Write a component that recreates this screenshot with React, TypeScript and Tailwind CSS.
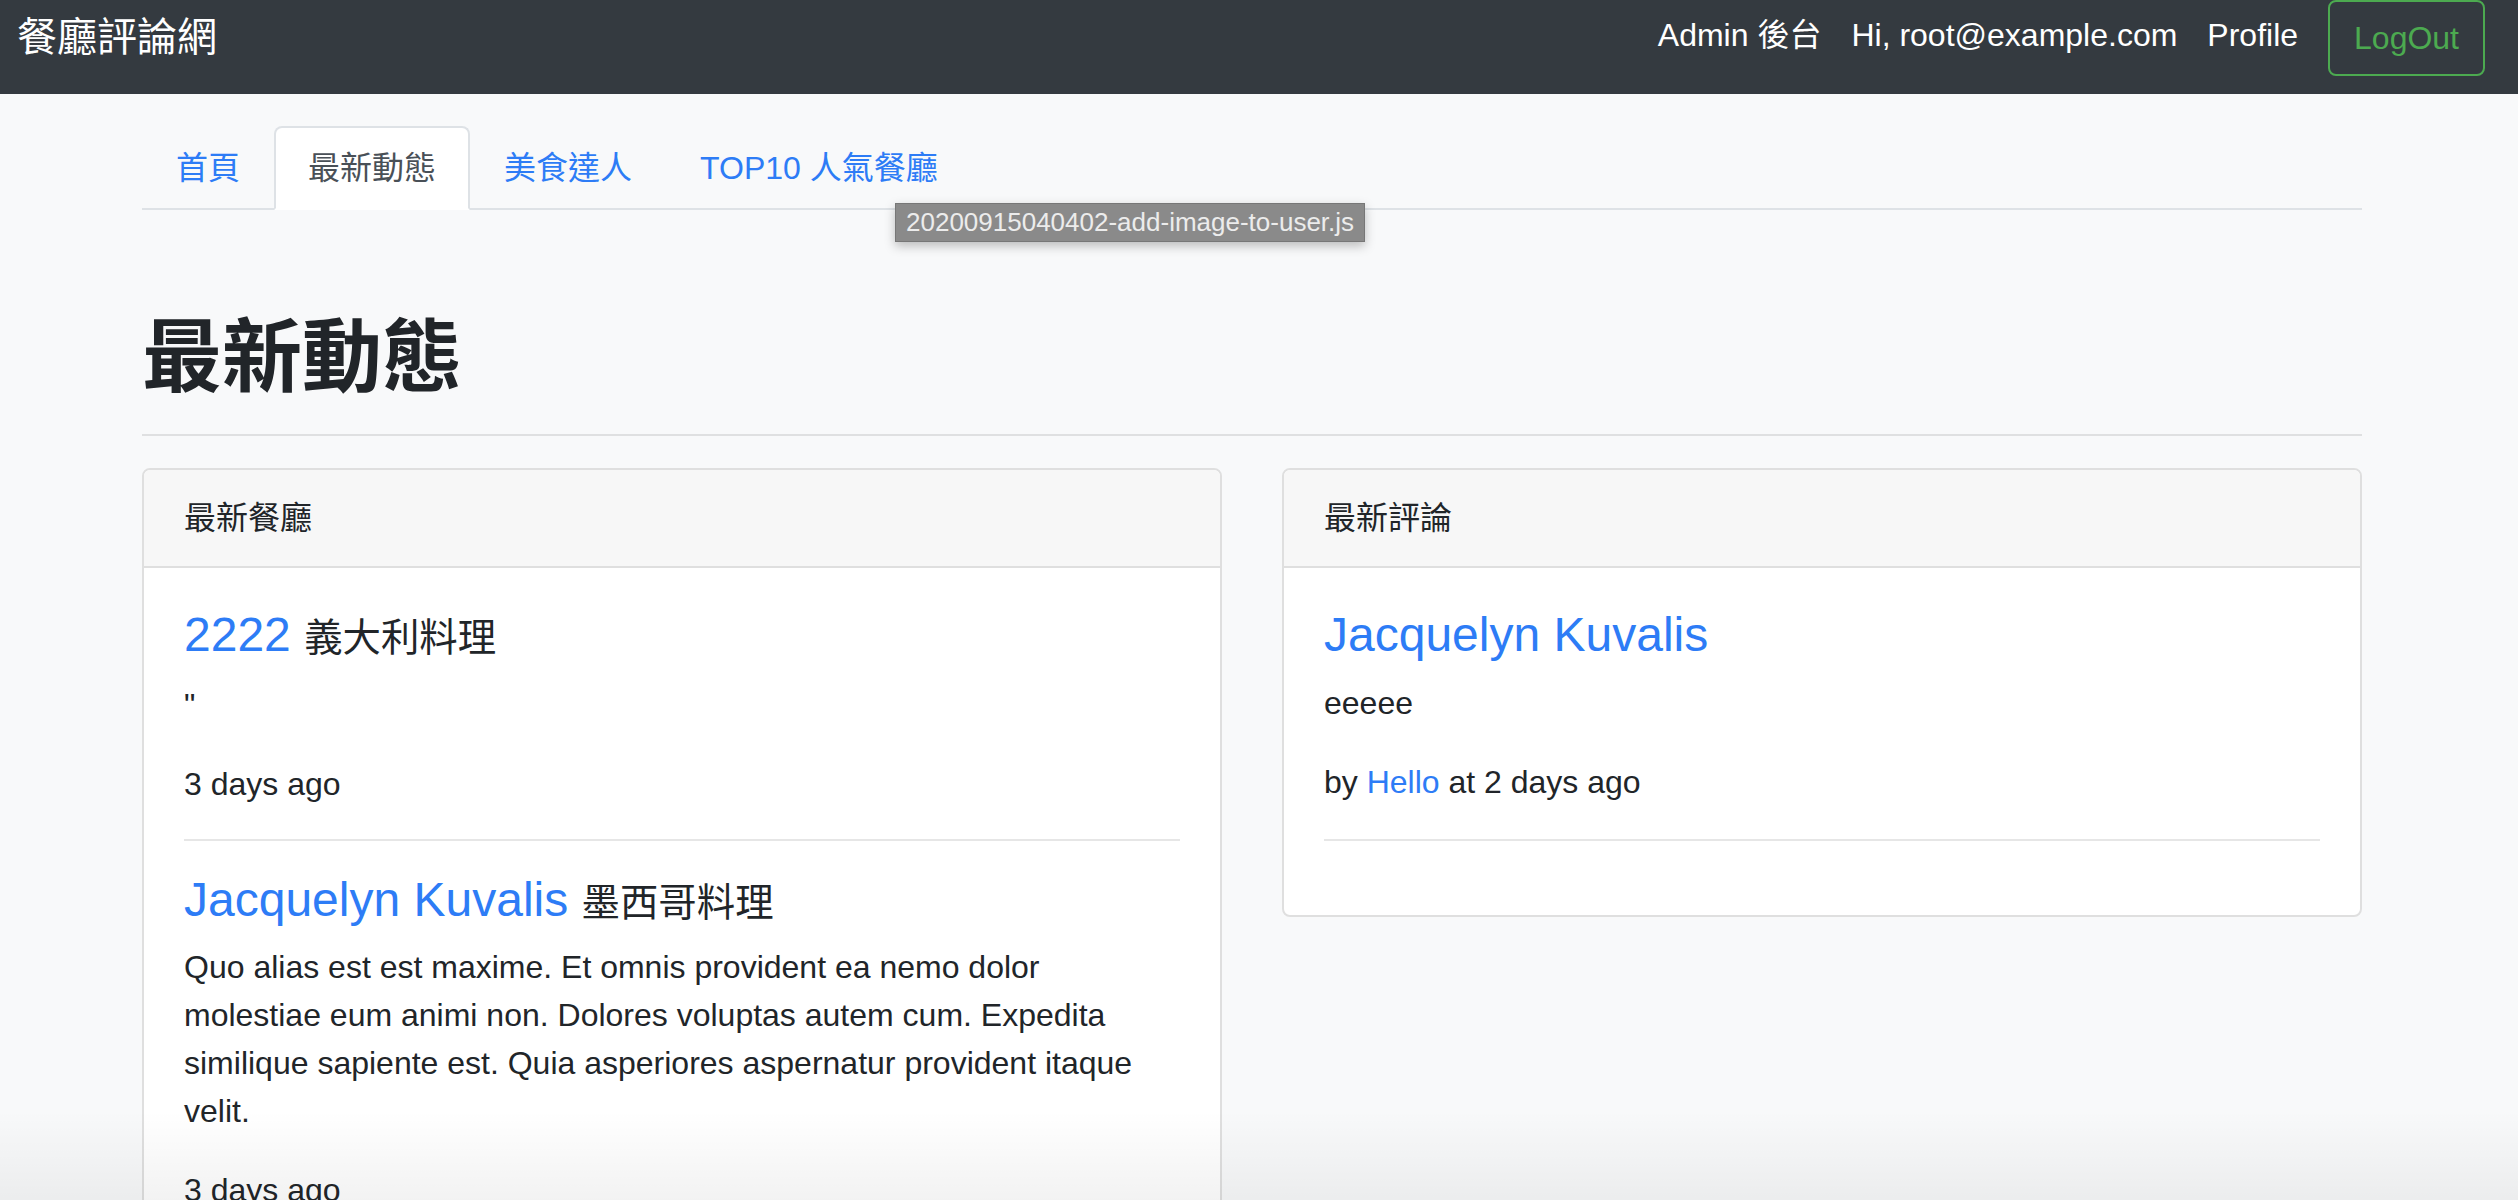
import React from "react";

const font = "font-['Liberation_Sans','Noto_Sans_CJK_TC',sans-serif]";

const Navbar = () => {
  return (
    <nav className="flex h-[94px] items-start justify-between bg-[#343a40] pl-[17px] pr-[33px]">
      <div className="flex h-[76px] items-center pb-[2px]">
        <a className="text-[40px] leading-[60px] text-white">餐廳評論網</a>
      </div>
      <div className="flex h-[76px] items-center gap-[30px] text-[32px] leading-[48px] text-white">
        <a className="pb-[6px]">Admin 後台</a>
        <a className="pb-[6px]">Hi, root@example.com</a>
        <a className="pb-[6px]">Profile</a>
        <button className="h-[76px] rounded-[8px] border-2 border-[#4caa50] px-[24px] text-[#4caa50]">
          LogOut
        </button>
      </div>
    </nav>
  );
};

const tabs = ["首頁", "最新動態", "美食達人", "TOP10 人氣餐廳"];

const Tabs = () => {
  return (
    <ul className="mt-[32px] flex border-b-2 border-[#dee2e6]">
      {tabs.map((t) => {
        const active = t === "最新動態";
        return (
          <li
            key={t}
            className={
              active
                ? "-mb-[2px] rounded-t-[8px] border-2 border-[#dee2e6] border-b-white bg-white px-[32px] py-[16px] text-[32px] leading-[48px] text-[#495057]"
                : "-mb-[2px] border-2 border-transparent px-[32px] py-[16px] text-[32px] leading-[48px] text-[#2d7cf6]"
            }
          >
            {t}
          </li>
        );
      })}
    </ul>
  );
};

const Card = ({ title, children }: { title: string; children: React.ReactNode }) => {
  return (
    <div className="overflow-hidden rounded-[8px] border-2 border-[#dfdfdf] bg-white">
      <div className="border-b-2 border-[#dfdfdf] bg-[#f7f7f7] px-[40px] py-[24px] text-[32px] leading-[48px]">
        {title}
      </div>
      <div className="p-[40px] pb-[42px]">{children}</div>
    </div>
  );
};

const Divider = () => <div className="mb-[32px] h-[2px] bg-[#e6e6e6]" />;

export default function App() {
  return (
    <div className={`relative h-[1200px] overflow-hidden bg-[#f8f9fa] text-[#212529] ${font}`}>
      <Navbar />

      <div className="ml-[142px] w-[2220px]">
        <Tabs />

        <h1 className="mt-[100px] text-[80px] font-bold leading-[96px]">最新動態</h1>
        <div className="mt-[28px] h-[2px] bg-[#dfe0e1]" />

        <div className="mt-[32px] grid grid-cols-2 items-start gap-[60px]">
          {/* 最新餐廳 */}
          <Card title="最新餐廳">
            <h4 className="mb-[16px] text-[48px] font-medium leading-[54px]">
              <a className="text-[#2d7cf6]">2222</a>{" "}
              <small className="text-[38.4px] font-normal">義大利料理</small>
            </h4>
            <p className="mb-[31px] text-[32px] leading-[48px]">"</p>
            <p className="mb-[31px] text-[32px] leading-[48px]">3 days ago</p>
            <Divider />

            <h4 className="mb-[13px] text-[48px] font-medium leading-[54px]">
              <a className="text-[#2d7cf6]">Jacquelyn Kuvalis</a>{" "}
              <small className="text-[38.4px] font-normal">墨西哥料理</small>
            </h4>
            <p className="mb-[31px] max-w-[985px] text-[32px] leading-[48px]">
              Quo alias est est maxime. Et omnis provident ea nemo dolor molestiae eum animi non. Dolores
              voluptas autem cum. Expedita similique sapiente est. Quia asperiores aspernatur provident itaque
              velit.
            </p>
            <p className="mb-[31px] text-[32px] leading-[48px]">3 days ago</p>
            <Divider />
          </Card>

          {/* 最新評論 */}
          <Card title="最新評論">
            <h4 className="mb-[17px] text-[48px] font-medium leading-[54px]">
              <a className="text-[#2d7cf6]">Jacquelyn Kuvalis</a>
            </h4>
            <p className="mb-[31px] text-[32px] leading-[48px]">eeeee</p>
            <p className="mb-[33px] text-[32px] leading-[48px]">
              by <a className="text-[#2d7cf6]">Hello</a> at 2 days ago
            </p>
            <Divider />
          </Card>
        </div>
      </div>

      {/* native title tooltip */}
      <div className="absolute left-[895px] top-[203px] h-[39px] border border-[#777] bg-[#8a8a8a] px-[10px] text-[26px] leading-[37px] text-[#ececec] shadow-[0_4px_10px_rgba(0,0,0,0.25)]">
        20200915040402-add-image-to-user.js
      </div>

      {/* bottom window shadow */}
      <div className="pointer-events-none absolute inset-x-0 bottom-0 h-[90px] bg-gradient-to-b from-transparent to-black/[0.05]" />
    </div>
  );
}
